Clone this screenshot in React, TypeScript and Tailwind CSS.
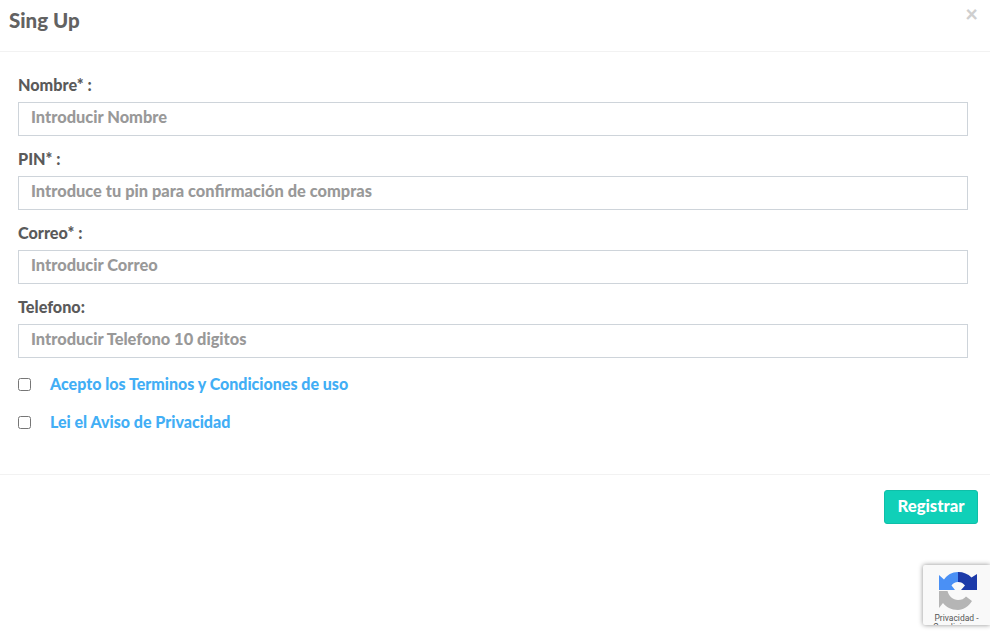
const FIELDS = [
  { label: "Nombre* :", placeholder: "Introducir Nombre" },
  { label: "PIN* :", placeholder: "Introduce tu pin para confirmación de compras" },
  { label: "Correo* :", placeholder: "Introducir Correo" },
  { label: "Telefono:", placeholder: "Introducir Telefono 10 digitos" },
];

const CHECKS = ["Acepto los Terminos y Condiciones de uso", "Lei el Aviso de Privacidad"];

function RecaptchaBadge() {
  return (
    <div className="absolute left-[923px] top-[565px] flex h-[60px] w-[67px] flex-col items-center overflow-hidden rounded-l-[2px] bg-[#f9f9f9] shadow-[0_0_5px_rgba(0,0,0,0.45)]">
      <svg viewBox="0 0 38 38" className="mt-[7px] ml-[2px] h-[38px] w-[38px] shrink-0">
        <path d="M19 0V10C16 10 14 11.500 12.500 13.500L16 18H0V3L5 7.500C8 3 13 0 19 0z" fill="#4a90f5" />
        <path d="M19 0A19 19 0 0 1 32.500 5.500L38 2V18H22L26 13.500C24 11 22 10 19 10z" fill="#1c3aa9" />
        <path d="M0 19H8.500C10 24.500 14 28 19 28C22.500 28 25 27 27 24.500L33 29C29.500 34.500 24.500 38 19 38C12 38 7 35 4 31L0 36z" fill="#b5b5b5" />
      </svg>
      <span className="mt-[3px] whitespace-nowrap font-['Roboto',sans-serif] text-[8.500px] leading-[10px] font-normal text-[#555]">
        Privacidad -
      </span>
      <span className="-mt-px whitespace-nowrap font-['Roboto',sans-serif] text-[8.500px] leading-[10px] font-normal text-[#555]">
        Condiciones
      </span>
    </div>
  );
}

export default function App() {
  return (
    <div className="relative h-[638px] w-[990px] overflow-hidden bg-white font-['Lato',sans-serif] font-black text-[#5a5a5a]">
      <header className="flex h-[52px] items-start justify-between border-b border-[#f2f2f2] pl-[9px] pr-[12px]">
        <h1 className="mt-[7px] text-[20.500px] leading-[26px] font-black text-[#626262]">Sing Up</h1>
        <span className="mt-[3px] text-[22px] leading-[22px] font-black text-[#cfcfcf]">×</span>
      </header>

      <form className="flex h-[422px] flex-col px-[18px] pt-[23px]">
        {FIELDS.map((field) => (
          <div key={field.label} className="mb-[13px] flex flex-col">
            <label className="mb-[7px] text-[16.200px] leading-[20px]">{field.label}</label>
            <input
              type="text"
              placeholder={field.placeholder}
              className="h-[34px] w-[950px] border border-[#ced4da] bg-white pb-[5px] pl-3 pr-3 text-[16.400px] font-black outline-none placeholder:text-[#999]"
            />
          </div>
        ))}
        <div className="mt-[3px] flex flex-col gap-[18px]">
          {CHECKS.map((text) => (
            <label key={text} className="flex h-[20px] items-center">
              <input type="checkbox" className="h-[13px] w-[13px] appearance-auto" />
              <a className="ml-[19px] text-[16px] leading-[20px] text-[#42aef5]">{text}</a>
            </label>
          ))}
        </div>
      </form>

      <footer className="flex justify-end border-t border-[#f2f2f2] pr-[12px] pt-[15px]">
        <button
          type="button"
          className="h-[34px] w-[94px] rounded-[3px] border border-[#0fbfa8] bg-[#10d0b8] text-[16.700px] font-black text-white"
        >
          Registrar
        </button>
      </footer>

      <RecaptchaBadge />
    </div>
  );
}
